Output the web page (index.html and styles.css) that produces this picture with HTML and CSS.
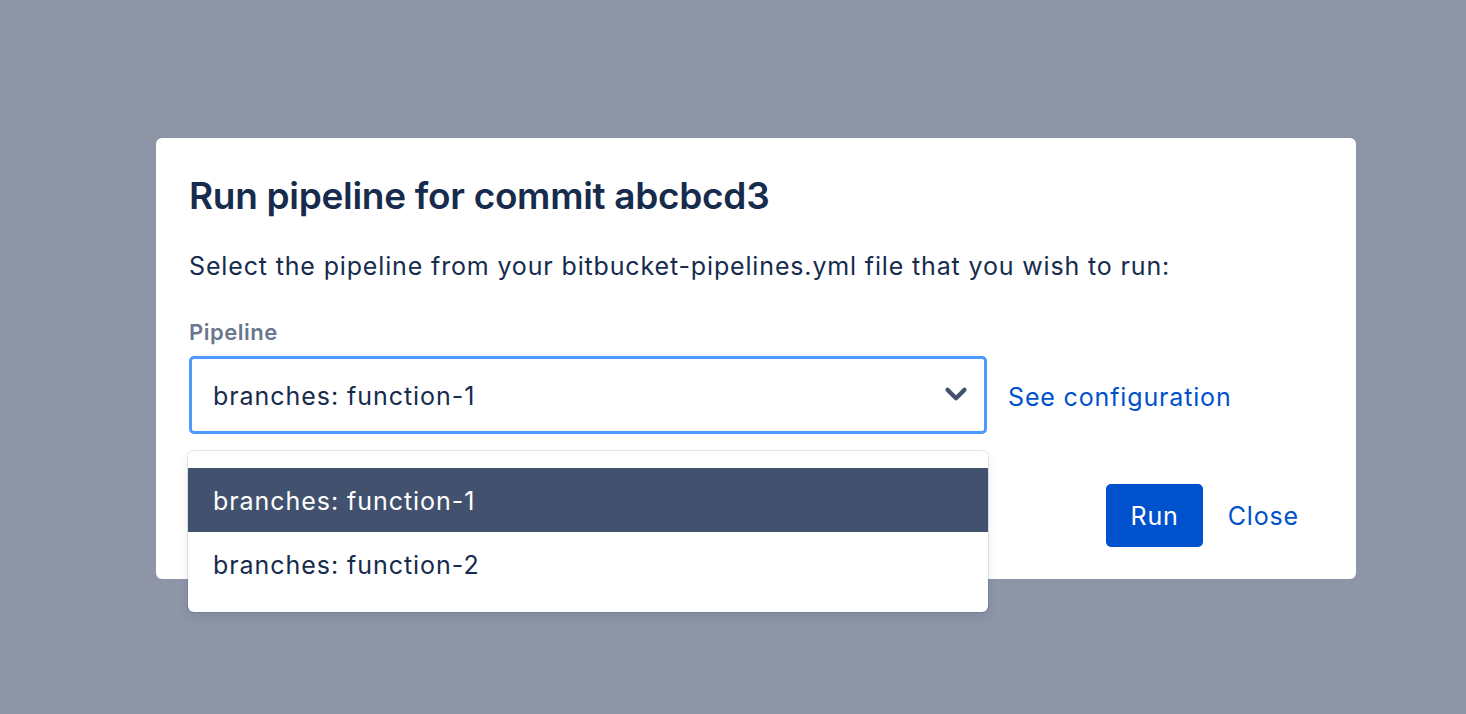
FILE: index.html
```html
<!DOCTYPE html>
<html>
<head>
<meta charset="utf-8">
<link rel="stylesheet" href="styles.css">
</head>
<body>
<div class="overlay">
  <div class="modal">
    <h1 class="title">Run pipeline for commit abcbcd3</h1>
    <p class="desc">Select the pipeline from your bitbucket-pipelines.yml file that you wish to run:</p>
    <div class="label">Pipeline</div>
    <div class="field-row">
      <div class="select-wrap">
        <div class="select">
          <span class="select-value">branches: function-1</span>
          <svg class="chevron" width="24" height="24" viewBox="0 0 24 24"><path d="M6 9 L12 15 L18 9" fill="none" stroke="#42526E" stroke-width="3" stroke-linecap="round" stroke-linejoin="round"/></svg>
        </div>
        <div class="menu">
          <div class="option active">branches: function-1</div>
          <div class="option">branches: function-2</div>
        </div>
      </div>
      <a class="link" href="#">See configuration</a>
    </div>
    <div class="footer">
      <button class="btn primary">Run</button>
      <button class="btn subtle">Close</button>
    </div>
  </div>
</div>
</body>
</html>
```

FILE: styles.css
```css
html, body {
  margin: 0;
  padding: 0;
}
body {
  background: #8d95a7;
  font-family: "Inter", "Noto Sans", sans-serif;
  color: #172b4d;
}
.overlay {
  width: 1466px;
  height: 714px;
  box-sizing: border-box;
  padding: 138px 0 0 156px;
}
.modal {
  width: 1200px;
  height: 441px;
  box-sizing: border-box;
  background: #fff;
  border-radius: 6px;
  padding: 30px 33px 0 33px;
}
.title {
  margin: 0;
  font-size: 37px;
  font-weight: 600;
  line-height: 56px;
  letter-spacing: -0.3px;
  color: #172b4d;
}
.desc {
  margin: 24px 0 0 0;
  font-size: 25px;
  letter-spacing: 0.85px;
  line-height: 36px;
  color: #172b4d;
}
.label {
  margin-top: 34px;
  font-size: 22px;
  font-weight: 600;
  letter-spacing: 0.5px;
  color: #6b778c;
  line-height: 28px;
}
.field-row {
  margin-top: 10px;
  display: flex;
  align-items: center;
  gap: 21px;
}
.select-wrap {
  position: relative;
  width: 798px;
}
.select {
  height: 78px;
  box-sizing: border-box;
  border: 3px solid #4c9aff;
  border-radius: 5px;
  display: flex;
  align-items: center;
  justify-content: space-between;
  padding: 2px 11px 0 21px;
}
.select-value {
  font-size: 25px;
  letter-spacing: 0.95px;
  color: #172b4d;
}
.chevron {
  width: 34px;
  height: 34px;
  margin-top: -4px;
}
.link {
  font-size: 25px;
  letter-spacing: 0.85px;
  color: #0052cc;
  text-decoration: none;
  margin-top: 4px;
}
.menu {
  position: absolute;
  left: -1px;
  top: 95px;
  width: 800px;
  box-sizing: border-box;
  background: #fff;
  border-radius: 6px;
  padding: 17px 0 16px 0;
  box-shadow: 0 0 0 1px rgba(9, 30, 66, 0.1), 0 4px 11px rgba(9, 30, 66, 0.1);
  z-index: 2;
}
.option {
  height: 64px;
  box-sizing: border-box;
  display: flex;
  align-items: center;
  padding: 2px 25px 0 25px;
  font-size: 25px;
  letter-spacing: 0.95px;
  color: #172b4d;
}
.option.active {
  background: #42526e;
  color: #fff;
}
.footer {
  margin-top: 50px;
  display: flex;
  justify-content: flex-end;
  gap: 5px;
  padding-right: 4px;
}
.btn {
  font-family: inherit;
  font-size: 25px;
  letter-spacing: 0.85px;
  border: none;
  border-radius: 5px;
  height: 63px;
  padding: 0 24px;
  cursor: pointer;
}
.btn.primary {
  background: #0052cc;
  color: #fff;
}
.btn.subtle {
  background: transparent;
  color: #0052cc;
  padding: 0 20px;
}
```
